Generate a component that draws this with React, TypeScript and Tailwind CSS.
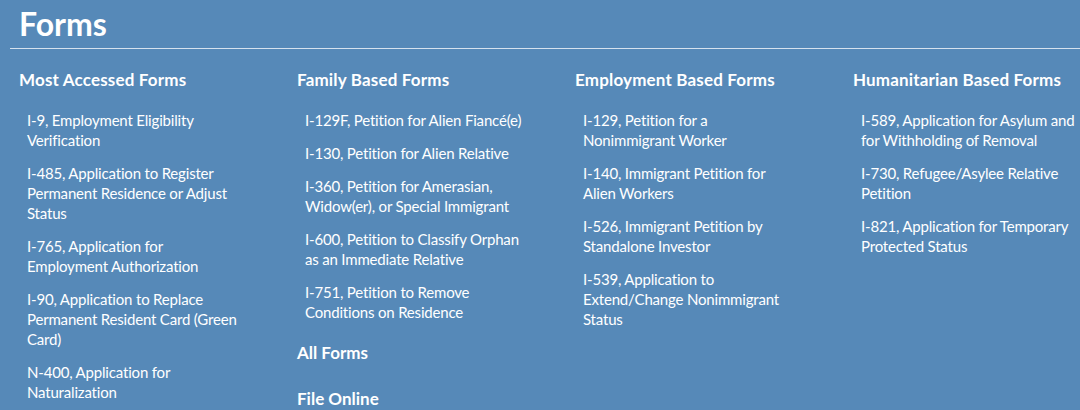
const columns = [
  {
    title: "Most Accessed Forms",
    items: [
      ["I-9, Employment Eligibility", "Verification"],
      ["I-485, Application to Register", "Permanent Residence or Adjust", "Status"],
      ["I-765, Application for", "Employment Authorization"],
      ["I-90, Application to Replace", "Permanent Resident Card (Green", "Card)"],
      ["N-400, Application for", "Naturalization"],
    ],
  },
  {
    title: "Family Based Forms",
    items: [
      ["I-129F, Petition for Alien Fiancé(e)"],
      ["I-130, Petition for Alien Relative"],
      ["I-360, Petition for Amerasian,", "Widow(er), or Special Immigrant"],
      ["I-600, Petition to Classify Orphan", "as an Immediate Relative"],
      ["I-751, Petition to Remove", "Conditions on Residence"],
    ],
    links: ["All Forms", "File Online"],
  },
  {
    title: "Employment Based Forms",
    items: [
      ["I-129, Petition for a", "Nonimmigrant Worker"],
      ["I-140, Immigrant Petition for", "Alien Workers"],
      ["I-526, Immigrant Petition by", "Standalone Investor"],
      ["I-539, Application to", "Extend/Change Nonimmigrant", "Status"],
    ],
  },
  {
    title: "Humanitarian Based Forms",
    items: [
      ["I-589, Application for Asylum and", "for Withholding of Removal"],
      ["I-730, Refugee/Asylee Relative", "Petition"],
      ["I-821, Application for Temporary", "Protected Status"],
    ],
  },
]

export default function App() {
  return (
    <div className="w-[1080px] h-[410px] overflow-hidden bg-[#5689b8] text-white font-['Lato',sans-serif]">
      <div className="pl-[10px]">
        <h1 className="pl-[9px] pt-[5px] h-[48px] text-[32px] leading-[38px] font-bold">Forms</h1>
        <div className="h-px bg-[#d6e2ee]" />
      </div>
      <div className="flex pl-[19px] pt-[19px]">
        {columns.map((col) => (
          <div key={col.title} className="w-[278px] shrink-0">
            <h2 className="text-[17px] leading-[24px] font-bold tracking-[0.01em]">{col.title}</h2>
            <ul className="mt-[18px] pl-2 flex flex-col gap-[13px]">
              {col.items.map((lines) => (
                <li key={lines[0]} className="text-[15px] leading-[20px] tracking-[-0.012em] whitespace-nowrap">
                  <a href="#">
                    {lines.map((line, i) => (
                      <span key={i}>
                        {i > 0 && <br />}
                        {line}
                      </span>
                    ))}
                  </a>
                </li>
              ))}
            </ul>
            {col.links && (
              <div className="mt-[19px] flex flex-col gap-[22px]">
                {col.links.map((l) => (
                  <a key={l} href="#" className="text-[17px] leading-[24px] font-bold">
                    {l}
                  </a>
                ))}
              </div>
            )}
          </div>
        ))}
      </div>
    </div>
  )
}
